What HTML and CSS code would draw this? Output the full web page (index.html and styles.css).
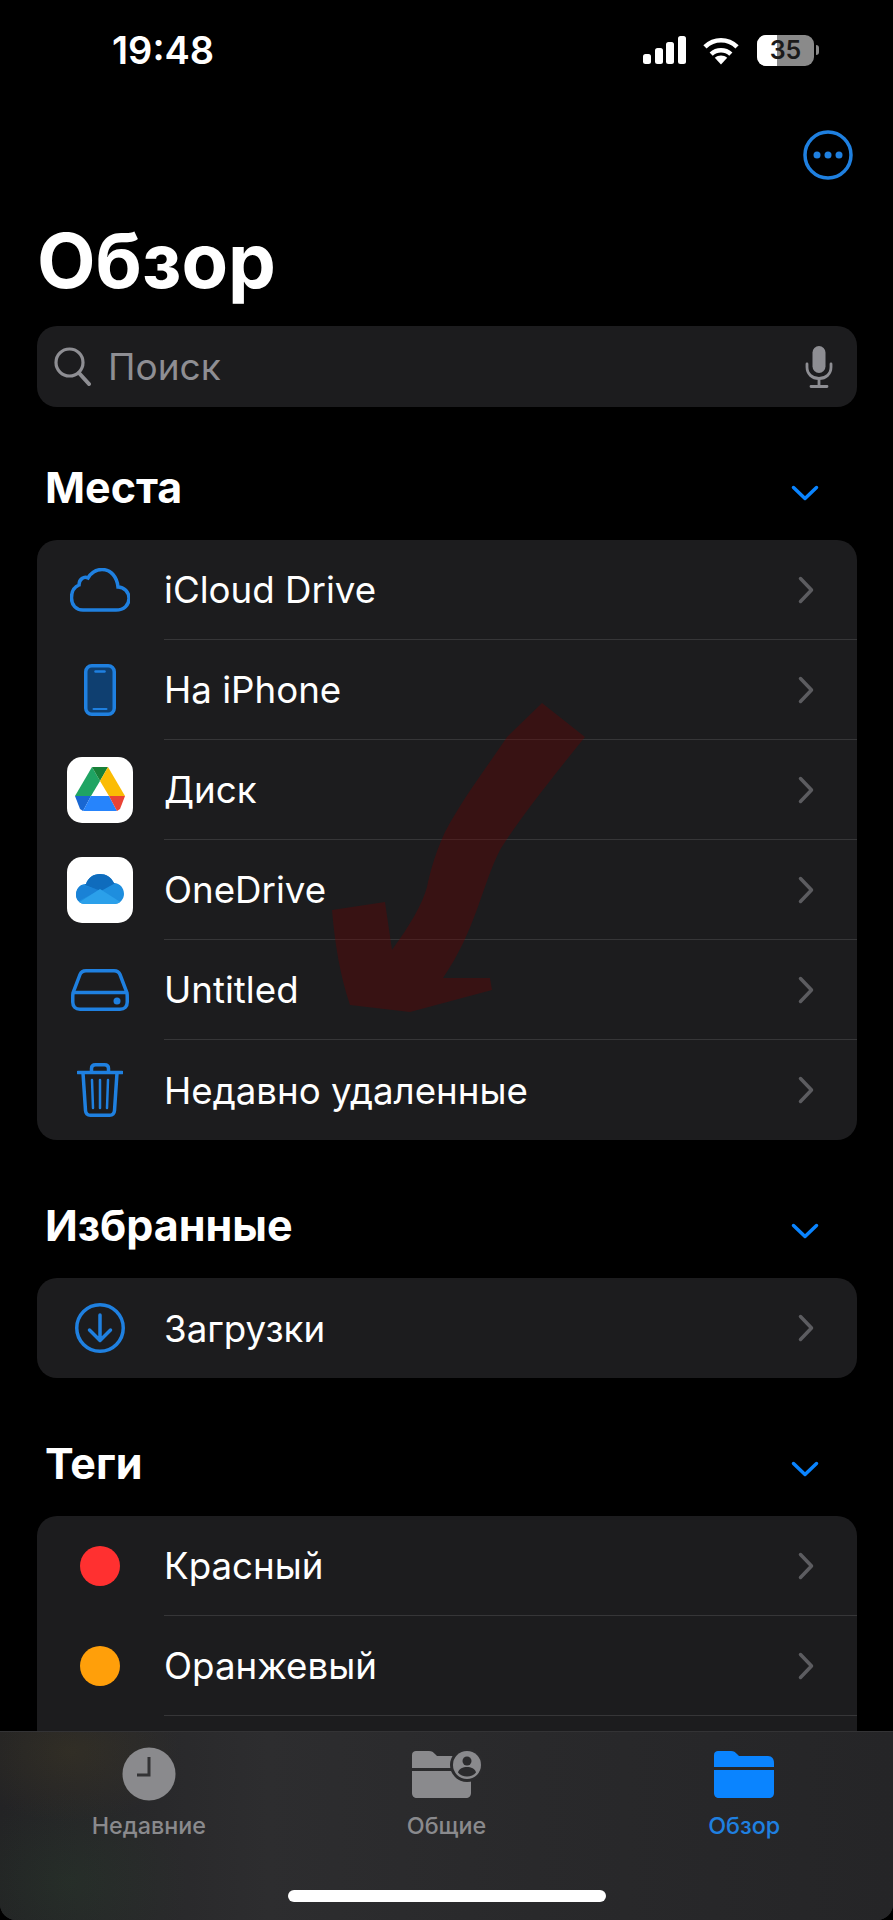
FILE: index.html
```html
<!DOCTYPE html>
<html lang="ru">
<head>
  <meta charset="UTF-8">
  <title>Обзор</title>
  <link rel="stylesheet" href="styles.css">
</head>
<body>

<div class="phone">
  <div class="status">
    <span class="time">19:48</span>
    <div class="status-icons">
      <svg class="signal" width="43" height="28" viewBox="0 0 43 28"><rect x="0" y="18" width="8" height="10" rx="2.5"/><rect x="12" y="12" width="8" height="16" rx="2.5"/><rect x="23" y="6" width="8" height="22" rx="2.5"/><rect x="35" y="0" width="8" height="28" rx="2.5"/></svg>
      <svg class="wifi" width="40" height="29" viewBox="0 0 38 28"><path d="M19 27.5l-6-6.5c3.500-3 8.500-3 12 0z"/><path d="M9.500 17.500c5.500-5 13.500-5 19 0" fill="none" stroke="#fff" stroke-width="4.500"/><path d="M3.500 10.500c9-8.500 22-8.500 31 0" fill="none" stroke="#fff" stroke-width="4.500"/></svg>
      <div class="battery"><span class="battery-fill"></span><span class="battery-num">35</span></div>
      <span class="battery-nub"></span>
    </div>
  </div>

  <div class="toolbar">
    <svg width="50" height="50" viewBox="0 0 50 50"><circle cx="25" cy="25" r="23" fill="none" stroke="#1f80e0" stroke-width="3.500"/><circle cx="14" cy="25" r="3.500" fill="#1f80e0"/><circle cx="25" cy="25" r="3.500" fill="#1f80e0"/><circle cx="36" cy="25" r="3.500" fill="#1f80e0"/></svg>
  </div>

  <h1 class="title">Обзор</h1>

  <div class="search">
    <svg width="37" height="39" viewBox="0 0 37 39"><circle cx="15.500" cy="15.500" r="13.500" fill="none" stroke="#8e8e93" stroke-width="3.200"/><path d="M25 26l10 11" stroke="#8e8e93" stroke-width="4" stroke-linecap="round"/></svg>
    <span class="search-text">Поиск</span>
    <svg class="mic" width="28" height="42" viewBox="0 0 28 42"><rect x="7.500" y="0" width="13" height="27" rx="6.500" fill="#8e8e93"/><path d="M2 18v3c0 7 5 11.500 12 11.500S26 28 26 21v-3" fill="none" stroke="#8e8e93" stroke-width="2.800" stroke-linecap="round"/><path d="M14 33v7M6 40.500h16" stroke="#8e8e93" stroke-width="2.800" stroke-linecap="round"/></svg>
  </div>

  <div class="section first">
    <div class="section-head">
      <span>Места</span>
      <svg class="down" width="28" height="16" viewBox="0 0 28 16"><path d="M2.500 2.500L14 13.500 25.500 2.500"/></svg>
    </div>
    <ul class="card">
      <li class="row">
        <div class="row-icon"><svg width="60" height="44" viewBox="0 0 60 44"><path d="M13 42H46C54 42 59 37 59 30.500 59 24 54 19 48 19 47 9 41 1.500 32 1.500 25 1.500 21 5 18 10 14 8 9 11 9 17 4 19 1.500 24 1.500 30 1.500 37 6 42 13 42Z" fill="none" stroke="#1f80e0" stroke-width="3.500"/></svg></div>
        <div class="row-body"><span>iCloud Drive</span><svg class="more" width="16" height="28" viewBox="0 0 16 28"><path d="M2.500 2.500L13.500 14 2.500 25.500"/></svg></div>
      </li>
      <li class="row">
        <div class="row-icon"><svg width="32" height="52" viewBox="0 0 32 52"><rect x="1.750" y="1.750" width="28.500" height="48.500" rx="6" fill="#0f3f70" stroke="#1f80e0" stroke-width="3.500"/><path d="M11.500 7.500h9" stroke="#1f80e0" stroke-width="2.500" stroke-linecap="round"/><path d="M9.500 45h13" stroke="#1f80e0" stroke-width="2" stroke-linecap="round"/></svg></div>
        <div class="row-body"><span>На iPhone</span><svg class="more" width="16" height="28" viewBox="0 0 16 28"><path d="M2.500 2.500L13.500 14 2.500 25.500"/></svg></div>
      </li>
      <li class="row">
        <div class="row-icon"><div class="tile"><svg width="66" height="66" viewBox="0 0 66 66">
          <polygon points="25,10 33,24 24,39 8,39" fill="#1fa463"/>
          <polygon points="25,10 41,10 33,24" fill="#188038"/>
          <polygon points="41,10 58,39 42,39 33,24" fill="#fbbc04"/>
          <polygon points="8,39 24,39 16,54 13,52" fill="#1967d2"/>
          <polygon points="24,39 42,39 50,54 16,54" fill="#2684fc"/>
          <polygon points="42,39 58,39 53,52 50,54" fill="#ea4335"/>
        </svg></div></div>
        <div class="row-body"><span>Диск</span><svg class="more" width="16" height="28" viewBox="0 0 16 28"><path d="M2.500 2.500L13.500 14 2.500 25.500"/></svg></div>
      </li>
      <li class="row">
        <div class="row-icon"><div class="tile"><svg width="66" height="66" viewBox="0 0 66 66">
          <defs><clipPath id="od"><path d="M18 47C12 47 9 42 9 38 9 33 12 27 19 27 21 21 26 17 33 17 39 17 44 20 47 26 53 26 57 31 57 37 57 42 53 47 47 47Z"/></clipPath></defs>
          <g clip-path="url(#od)">
            <rect width="66" height="66" fill="#1e8ede"/>
            <polygon points="0,24 33,33 0,50" fill="#1a82d6"/>
            <polygon points="14,12 52,12 52,24 34,34 18,28" fill="#0f6cbd"/>
            <polygon points="33,32 8,48 58,48" fill="#2ba0ea"/>
          </g>
        </svg></div></div>
        <div class="row-body"><span>OneDrive</span><svg class="more" width="16" height="28" viewBox="0 0 16 28"><path d="M2.500 2.500L13.500 14 2.500 25.500"/></svg></div>
      </li>
      <li class="row">
        <div class="row-icon"><svg width="58" height="42" viewBox="0 0 58 42"><path d="M15 1.750H43C46 1.750 48 3 49 5.500L56 24C56.250 25.500 56.250 27 56.250 29V33C56.250 37.500 53.500 40.250 49 40.250H9C4.500 40.250 1.750 37.500 1.750 33V29C1.750 27 1.750 25.500 2 24L9 5.500C10 3 12 1.750 15 1.750Z" fill="none" stroke="#1f80e0" stroke-width="3.500"/><path d="M3 23.500H55" stroke="#1f80e0" stroke-width="3.500"/><circle cx="46" cy="32" r="3.500" fill="#1f80e0"/></svg></div>
        <div class="row-body"><span>Untitled</span><svg class="more" width="16" height="28" viewBox="0 0 16 28"><path d="M2.500 2.500L13.500 14 2.500 25.500"/></svg></div>
      </li>
      <li class="row">
        <div class="row-icon"><svg width="46" height="54" viewBox="0 0 46 54"><path d="M1 9.500H45" stroke="#1f80e0" stroke-width="3.500" stroke-linecap="round"/><path d="M14.500 9V5.500C14.500 3 16 1.750 18.500 1.750H27.500C30 1.750 31.500 3 31.500 5.500V9" fill="none" stroke="#1f80e0" stroke-width="3.500"/><path d="M6 10L8.500 47.500C8.700 50.500 10.500 52.250 13.500 52.250H32.500C35.500 52.250 37.300 50.500 37.500 47.500L40 10" fill="none" stroke="#1f80e0" stroke-width="3.500"/><path d="M15 17L16 45M23 17V45M31 17L30 45" stroke="#1f80e0" stroke-width="2.500" stroke-linecap="round"/></svg></div>
        <div class="row-body"><span>Недавно удаленные</span><svg class="more" width="16" height="28" viewBox="0 0 16 28"><path d="M2.500 2.500L13.500 14 2.500 25.500"/></svg></div>
      </li>
    </ul>
  </div>

  <div class="section">
    <div class="section-head">
      <span>Избранные</span>
      <svg class="down" width="28" height="16" viewBox="0 0 28 16"><path d="M2.500 2.500L14 13.500 25.500 2.500"/></svg>
    </div>
    <ul class="card">
      <li class="row">
        <div class="row-icon"><svg width="50" height="50" viewBox="0 0 50 50"><circle cx="25" cy="25" r="23.250" fill="none" stroke="#1f80e0" stroke-width="3.500"/><path d="M25 12V37M14.500 27L25 37.500 35.500 27" fill="none" stroke="#1f80e0" stroke-width="3.500" stroke-linecap="round" stroke-linejoin="round"/></svg></div>
        <div class="row-body"><span>Загрузки</span><svg class="more" width="16" height="28" viewBox="0 0 16 28"><path d="M2.500 2.500L13.500 14 2.500 25.500"/></svg></div>
      </li>
    </ul>
  </div>

  <div class="section">
    <div class="section-head">
      <span>Теги</span>
      <svg class="down" width="28" height="16" viewBox="0 0 28 16"><path d="M2.500 2.500L14 13.500 25.500 2.500"/></svg>
    </div>
    <ul class="card">
      <li class="row">
        <div class="row-icon"><span class="dot red"></span></div>
        <div class="row-body"><span>Красный</span><svg class="more" width="16" height="28" viewBox="0 0 16 28"><path d="M2.500 2.500L13.500 14 2.500 25.500"/></svg></div>
      </li>
      <li class="row">
        <div class="row-icon"><span class="dot orange"></span></div>
        <div class="row-body"><span>Оранжевый</span><svg class="more" width="16" height="28" viewBox="0 0 16 28"><path d="M2.500 2.500L13.500 14 2.500 25.500"/></svg></div>
      </li>
      <li class="row">
        <div class="row-icon"><span class="dot yellow"></span></div>
        <div class="row-body"><span>Желтый</span><svg class="more" width="16" height="28" viewBox="0 0 16 28"><path d="M2.500 2.500L13.500 14 2.500 25.500"/></svg></div>
      </li>
    </ul>
  </div>

  <!-- стрелка нарисована поверх скриншота -->
  <svg class="arrow" width="280" height="340" viewBox="320 690 280 340"><path d="M542 703L585 737C550 780 515 825 500 850 482 885 476 930 443 978L490 978 492 990 410 1012 350 1005C340 975 335 945 332 910L385 902 392 950C410 925 422 905 427 887 433 860 438 848 445 832 465 795 485 770 507 737Z"/></svg>

  <div class="tabbar">
    <div class="tabs">
      <div class="tab">
        <svg width="54" height="54" viewBox="0 0 54 54"><circle cx="27" cy="27" r="26.500" fill="#8a8a8d"/><path d="M27 10V28H15" fill="none" stroke="#333335" stroke-width="3"/></svg>
        <span>Недавние</span>
      </div>
      <div class="tab">
        <svg width="70" height="48" viewBox="0 0 70 48"><path d="M4 1H17C20 1 21 2 23 4L25 6H50C56 6 59 9 59 14V18H0V5C0 2 2 1 4 1ZM0 21H59V43C59 46 57 48 54 48H5C2 48 0 46 0 43Z" fill="#8a8a8d"/><circle cx="55" cy="15" r="17" fill="#2b2b2d"/><circle cx="55" cy="15" r="14" fill="#8a8a8d"/><circle cx="55" cy="11" r="4.500" fill="#2b2b2d"/><path d="M46 22.500C47 18.500 51 17 55 17S63 18.500 64 22.500C62 25 58.500 26.500 55 26.500S48 25 46 22.500Z" fill="#2b2b2d"/></svg>
        <span>Общие</span>
      </div>
      <div class="tab now">
        <svg width="60" height="48" viewBox="0 0 60 48"><path d="M4 1H17C20 1 21 2 23 4L25 6H54C58 6 60 9 60 13V17H0V5C0 2 2 1 4 1ZM0 20H60V43C60 46 58 48 55 48H5C2 48 0 46 0 43Z" fill="#0a84ff"/></svg>
        <span>Обзор</span>
      </div>
    </div>
    <div class="home-bar"></div>
  </div>
</div>

</body>
</html>
```
FILE: styles.css
```css
* {
  margin: 0;
  padding: 0;
  list-style: none;
  box-sizing: border-box;
}
body {
  background-color: #000;
  font-family: Inter, "Liberation Sans", sans-serif;
  color: #fff;
}
.phone {
  width: 893px;
  height: 1920px;
  position: relative;
  overflow: hidden;
  background-color: #000;
}

/* статус бар */
.status {
  height: 100px;
  padding: 0 74px 0 112px;
  display: flex;
  align-items: center;
  justify-content: space-between;
}
.time {
  font-size: 38px;
  font-weight: 600;
}
.status-icons {
  display: flex;
  align-items: center;
}
.status-icons svg {
  fill: #fff;
}
.wifi {
  margin-left: 15px;
}
.battery {
  width: 57px;
  height: 31px;
  margin-left: 16px;
  border-radius: 9px;
  background-color: #8a8a8a;
  position: relative;
  overflow: hidden;
  display: flex;
  align-items: center;
  justify-content: center;
}
.battery-fill {
  width: 20px;
  background-color: #fff;
  position: absolute;
  top: 0;
  bottom: 0;
  left: 0;
}
.battery-num {
  font-size: 25px;
  font-weight: 600;
  color: #1a1a1a;
  position: relative;
}
.battery-nub {
  width: 3px;
  height: 10px;
  margin-left: 2px;
  border-radius: 0 3px 3px 0;
  background-color: #8a8a8a;
}

.toolbar {
  height: 110px;
  padding-right: 40px;
  display: flex;
  align-items: center;
  justify-content: flex-end;
}
.title {
  height: 116px;
  padding-left: 37px;
  font-size: 76px;
  font-weight: 700;
  line-height: 100px;
}

.search {
  height: 81px;
  margin: 0 36px 0 37px;
  padding: 0 24px 0 17px;
  border-radius: 20px;
  background-color: #1c1c1e;
  display: flex;
  align-items: center;
}
.search-text {
  margin-left: 17px;
  flex: 1;
  font-size: 37px;
  color: #8e8e93;
}

/* секции */
.section {
  margin-top: 53px;
}
.section.first {
  margin-top: 48px;
}
.section-head {
  height: 66px;
  margin-bottom: 19px;
  padding: 0 37px 2px 45px;
  display: flex;
  align-items: center;
  justify-content: space-between;
  font-size: 43px;
  font-weight: 650;
}
.section-head .down {
  margin-right: 37px;
  margin-top: 12px;
}
.down path,
.more path {
  fill: none;
  stroke-linecap: round;
  stroke-linejoin: round;
}
.down path {
  stroke: #0a84ff;
  stroke-width: 3.5;
}
.more path {
  stroke: #5c5c60;
  stroke-width: 3.5;
}

.card {
  margin: 0 36px 0 37px;
  border-radius: 20px;
  background-color: #1c1c1e;
  overflow: hidden;
}
.row {
  height: 100px;
  display: flex;
}
.row-icon {
  width: 126px;
  flex-shrink: 0;
  display: flex;
  align-items: center;
  justify-content: center;
}
.row-body {
  flex: 1;
  margin-left: 1px;
  padding-right: 43px;
  display: flex;
  align-items: center;
  justify-content: space-between;
  border-bottom: 1px solid #363638;
  font-size: 36.7px;
}
.row:last-child .row-body {
  border-bottom: 0;
}
.tile {
  width: 66px;
  height: 66px;
  border-radius: 15px;
  background-color: #fff;
}
.tile svg {
  display: block;
}
.dot {
  width: 40px;
  height: 40px;
  border-radius: 50%;
}
.red {
  background-color: #ff3030;
}
.orange {
  background-color: #ff9f0a;
}
.yellow {
  background-color: #ffd60a;
}

/* стрелка */
.arrow {
  position: absolute;
  left: 320px;
  top: 690px;
}
.arrow path {
  fill: rgba(110,0,0,.35);
}

/* таббар */
.tabbar {
  height: 189px;
  position: absolute;
  left: 0;
  right: 0;
  bottom: 0;
  border-top: 1px solid #333335;
  border-radius: 0 0 16px 16px;
  background-color: #29292b;
  background-image:
    radial-gradient(ellipse 110px 70px at 70px 20px, rgba(90,75,30,.22), rgba(0,0,0,0)),
    radial-gradient(ellipse 120px 90px at 70px 150px, rgba(40,75,45,.22), rgba(0,0,0,0)),
    linear-gradient(90deg, #232325, #2d2d2f 30%, #29292b 60%, #252527);
}
.tabs {
  display: flex;
  padding-top: 15px;
}
.tab {
  flex: 1;
  height: 100px;
  display: flex;
  flex-direction: column;
  align-items: center;
  justify-content: flex-start;
  font-size: 23.3px;
  font-weight: 500;
  color: #8a8a8d;
}
.tab svg {
  height: 54px;
  margin-bottom: 10px;
}
.tab.now {
  color: #1f80e0;
}
.home-bar {
  width: 318px;
  height: 12px;
  position: absolute;
  left: 288px;
  bottom: 18px;
  border-radius: 6px;
  background-color: #fff;
}
```
